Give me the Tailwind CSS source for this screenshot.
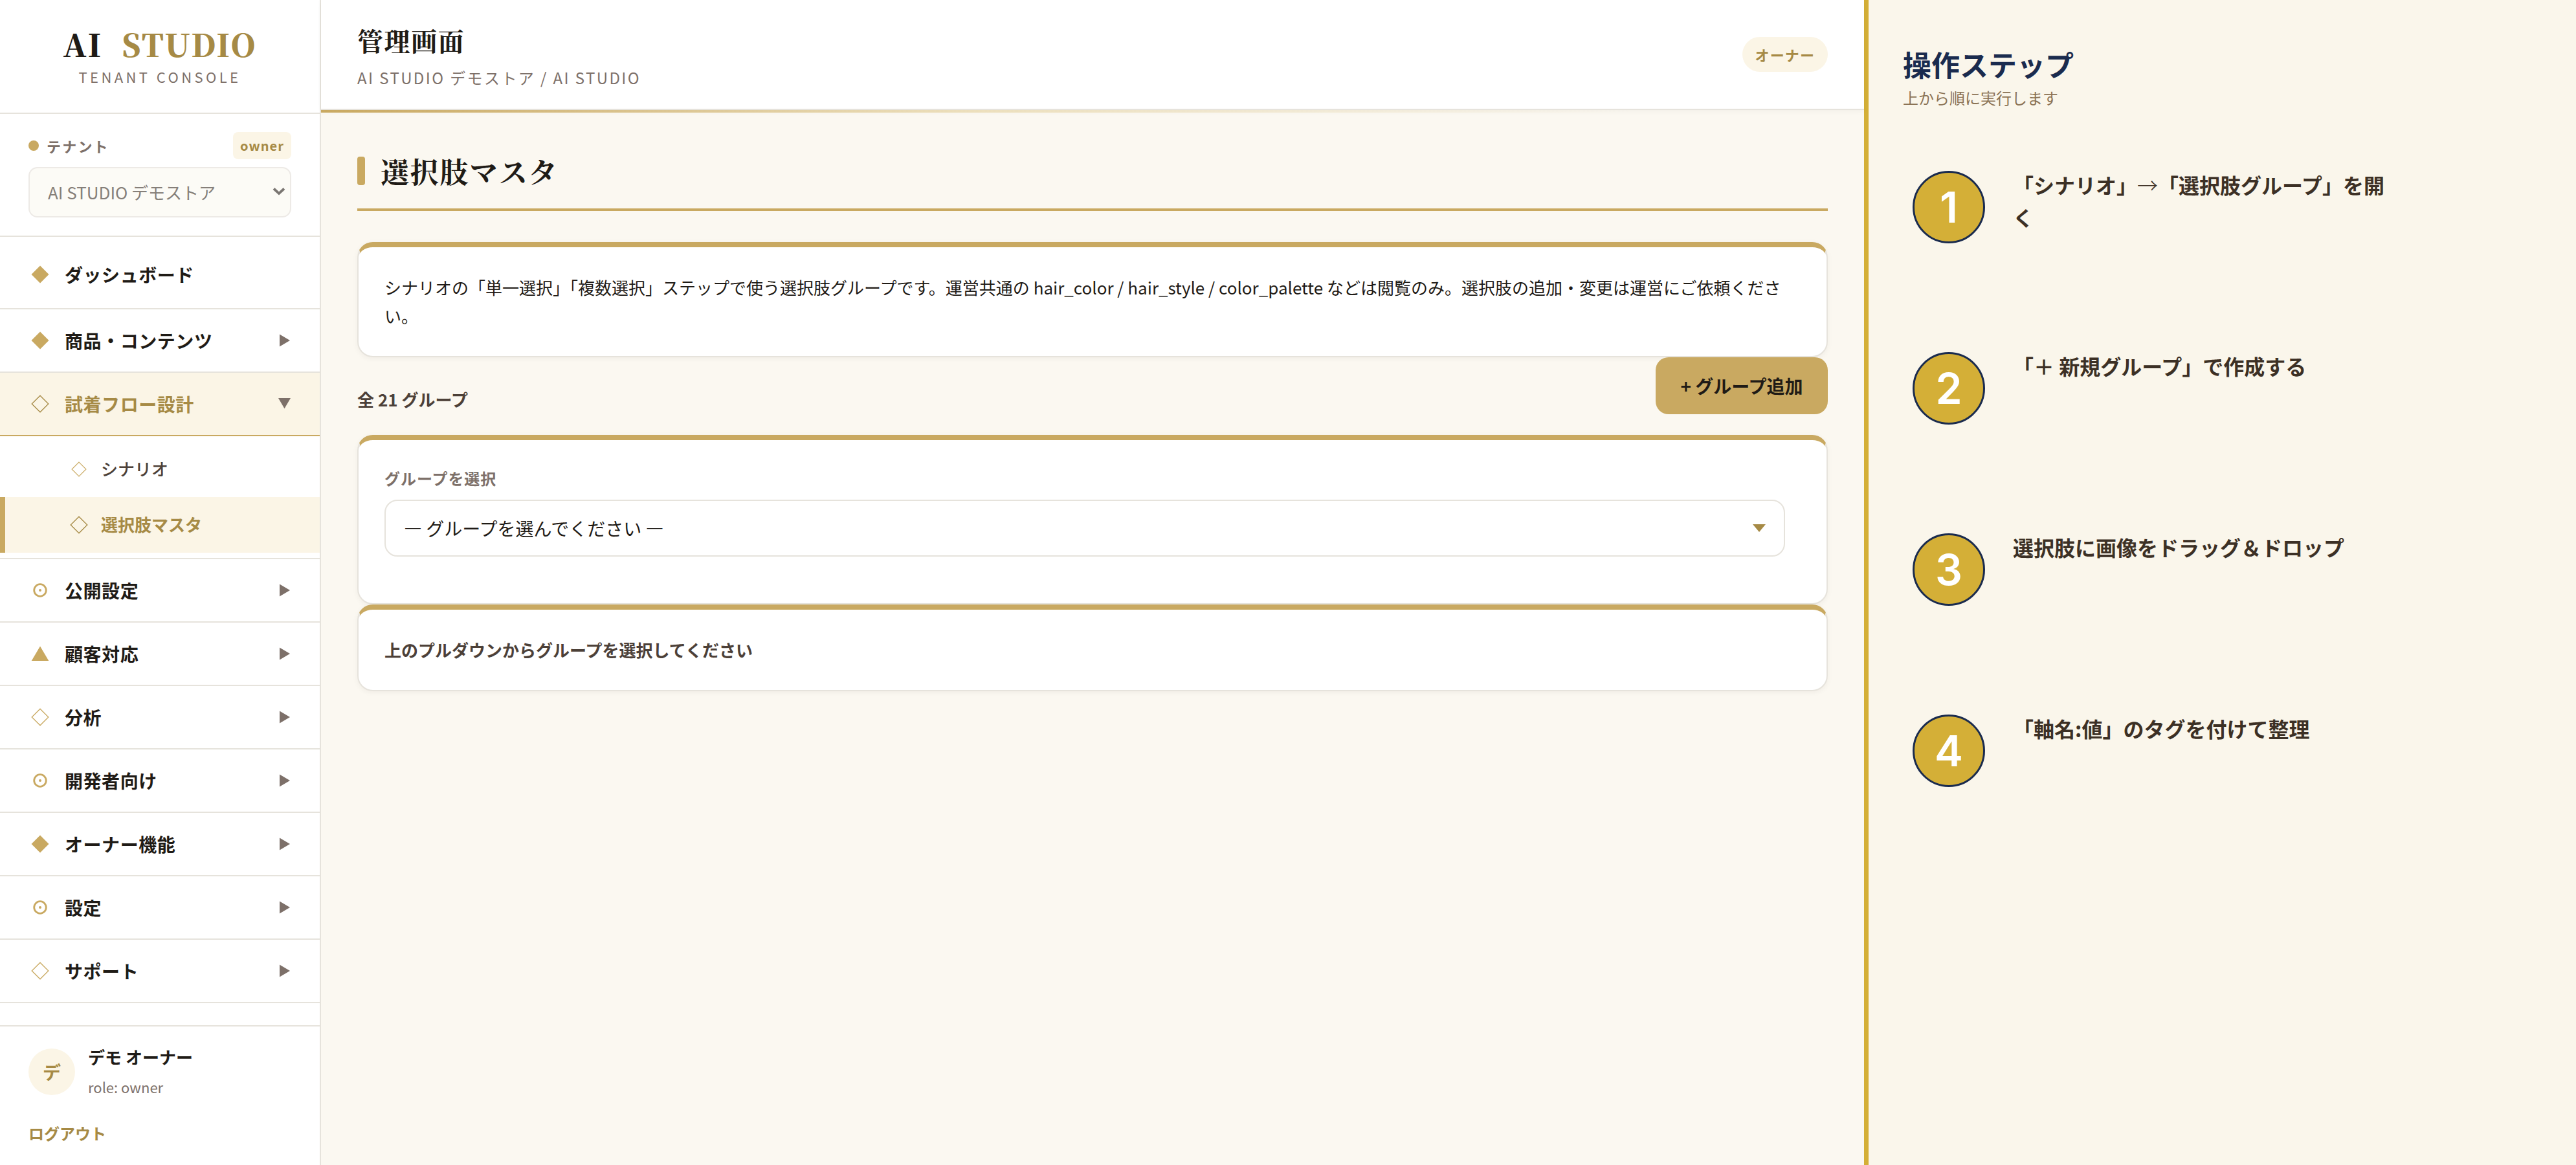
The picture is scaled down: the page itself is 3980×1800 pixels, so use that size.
<!DOCTYPE html>
<html lang="ja">
<head>
    <meta charset="UTF-8">
    <meta name="viewport" content="width=device-width, initial-scale=1.0">
    <title>AI STUDIO 管理画面</title>
    <script src="https://cdn.jsdelivr.net/npm/@tailwindcss/browser@4"></script>
</head>
<body class="flex w-[3980px] h-[1800px] overflow-hidden bg-[#fbf8f1] text-[#1f1b16] font-['Noto_Sans_CJK_JP',sans-serif] text-[26px] leading-[44px]">

    <!-- Icon symbols -->
    <svg class="hidden">
        <symbol id="diamond" viewBox="0 0 28 28"><path d="M14 .5 27.5 14 14 27.5.5 14z" fill="currentColor"/></symbol>
        <symbol id="diamond-o" viewBox="0 0 28 28"><path d="M14 1.2 26.8 14 14 26.8 1.2 14z" fill="none" stroke="currentColor" stroke-width="1.3"/></symbol>
        <symbol id="circle-dot" viewBox="0 0 28 28"><circle cx="14" cy="14" r="9.3" fill="none" stroke="currentColor" stroke-width="2.8"/><circle cx="14" cy="14" r="2" fill="currentColor"/></symbol>
        <symbol id="triangle" viewBox="0 0 28 28"><path d="M14 2.5 27.3 25H.7z" fill="currentColor"/></symbol>
        <symbol id="caret-right" viewBox="0 0 20 20"><path d="M2 .5 18 10 2 19.500z" fill="currentColor"/></symbol>
        <symbol id="caret-down" viewBox="0 0 20 20"><path d="M0 1h19L9.500 17.300z" fill="currentColor"/></symbol>
    </svg>

    <!-- Sidebar -->
    <aside class="flex flex-col w-[496px] shrink-0 bg-white border-r-2 border-[#e6e3dc]">
        <div class="h-[176px] pt-8 border-b-2 border-[#e6e3dc] text-center">
            <div class="font-['Noto_Serif_CJK_JP','Liberation_Serif',serif] font-black text-[48px] leading-[72px] tracking-[1.920px] whitespace-pre">AI <span class="text-[#a68a45] ml-4">STUDIO</span></div>
            <div class="text-[22px] leading-[28px] tracking-[4.4px] text-[#7d7069]">TENANT CONSOLE</div>
        </div>

        <div class="h-[190px] px-11 pt-7 border-b-2 border-[#e6e3dc]">
            <div class="flex items-center w-[406px] h-[42px]">
                <span class="size-4 rounded-full bg-[#c9a961]"></span>
                <span class="ml-3 font-bold text-[22px] tracking-[2.2px] text-[#7d7069]">テナント</span>
                <span class="ml-auto flex items-center justify-center w-[90px] h-[42px] rounded-lg bg-[#fbf5e6] font-bold text-[20px] tracking-[1px] text-[#a68a45]">owner</span>
            </div>
            <div class="mt-3 flex items-center justify-between w-[406px] h-[78px] pl-7 pr-[7px] rounded-[14px] border-2 border-[#edeae6] bg-[#fcfbf6] text-[#857f79]">
                <span>AI STUDIO デモストア</span>
                <svg class="w-5 h-4" viewBox="0 0 20 16"><path d="m2 2.500 8 7.500 8-7.500" fill="none" stroke="#7a7672" stroke-width="3.800"/></svg>
            </div>
        </div>

        <nav class="flex-1 font-bold text-[28px] tracking-[0.560px]">
            <a class="flex items-center h-[112px] pl-11 pt-1.5 border-b-2 border-[#e6e3dc]">
                <span class="w-9 flex justify-center text-[#c9a961]"><svg class="size-7"><use href="#diamond"/></svg></span>
                <span class="ml-5">ダッシュボード</span>
            </a>
            <a class="flex items-center h-[98px] pl-11 pr-11 border-b-2 border-[#e6e3dc]">
                <span class="w-9 flex justify-center text-[#c9a961]"><svg class="size-7"><use href="#diamond"/></svg></span>
                <span class="ml-5">商品・コンテンツ</span>
                <svg class="size-5 ml-auto text-[#7d7069]"><use href="#caret-right"/></svg>
            </a>
            <a class="flex items-center h-[98px] pl-11 pr-11 border-b-2 border-[#c9a961] bg-[#fbf5e6] text-[#a68a45]">
                <span class="w-9 flex justify-center"><svg class="size-7"><use href="#diamond-o"/></svg></span>
                <span class="ml-5">試着フロー設計</span>
                <svg class="size-5 ml-auto text-[#7d7069]"><use href="#caret-down"/></svg>
            </a>
            <div class="py-2 border-b-2 border-[#e6e3dc] text-[26px] tracking-normal">
                <a class="flex items-center h-[86px] pl-[104px] font-medium text-[#4c4038]">
                    <span class="w-9 flex justify-center text-[#c9a961]"><svg class="size-6"><use href="#diamond-o"/></svg></span>
                    <span class="ml-4 pb-[3px]">シナリオ</span>
                </a>
                <a class="flex items-center h-[86px] pl-24 border-l-8 border-[#c9a961] bg-[#fbf5e6] text-[#a68a45]">
                    <span class="w-9 flex justify-center"><svg class="size-7"><use href="#diamond-o"/></svg></span>
                    <span class="ml-4 pb-[3px]">選択肢マスタ</span>
                </a>
            </div>
            <a class="flex items-center h-[98px] pl-11 pr-11 border-b-2 border-[#e6e3dc]">
                <span class="w-9 flex justify-center text-[#c9a961]"><svg class="size-7"><use href="#circle-dot"/></svg></span>
                <span class="ml-5">公開設定</span>
                <svg class="size-5 ml-auto text-[#7d7069]"><use href="#caret-right"/></svg>
            </a>
            <a class="flex items-center h-[98px] pl-11 pr-11 border-b-2 border-[#e6e3dc]">
                <span class="w-9 flex justify-center text-[#c9a961]"><svg class="size-7"><use href="#triangle"/></svg></span>
                <span class="ml-5">顧客対応</span>
                <svg class="size-5 ml-auto text-[#7d7069]"><use href="#caret-right"/></svg>
            </a>
            <a class="flex items-center h-[98px] pl-11 pr-11 border-b-2 border-[#e6e3dc]">
                <span class="w-9 flex justify-center text-[#c9a961]"><svg class="size-7"><use href="#diamond-o"/></svg></span>
                <span class="ml-5">分析</span>
                <svg class="size-5 ml-auto text-[#7d7069]"><use href="#caret-right"/></svg>
            </a>
            <a class="flex items-center h-[98px] pl-11 pr-11 border-b-2 border-[#e6e3dc]">
                <span class="w-9 flex justify-center text-[#c9a961]"><svg class="size-7"><use href="#circle-dot"/></svg></span>
                <span class="ml-5">開発者向け</span>
                <svg class="size-5 ml-auto text-[#7d7069]"><use href="#caret-right"/></svg>
            </a>
            <a class="flex items-center h-[98px] pl-11 pr-11 border-b-2 border-[#e6e3dc]">
                <span class="w-9 flex justify-center text-[#c9a961]"><svg class="size-7"><use href="#diamond"/></svg></span>
                <span class="ml-5">オーナー機能</span>
                <svg class="size-5 ml-auto text-[#7d7069]"><use href="#caret-right"/></svg>
            </a>
            <a class="flex items-center h-[98px] pl-11 pr-11 border-b-2 border-[#e6e3dc]">
                <span class="w-9 flex justify-center text-[#c9a961]"><svg class="size-7"><use href="#circle-dot"/></svg></span>
                <span class="ml-5">設定</span>
                <svg class="size-5 ml-auto text-[#7d7069]"><use href="#caret-right"/></svg>
            </a>
            <a class="flex items-center h-[98px] pl-11 pr-11 border-b-2 border-[#e6e3dc]">
                <span class="w-9 flex justify-center text-[#c9a961]"><svg class="size-7"><use href="#diamond-o"/></svg></span>
                <span class="ml-5">サポート</span>
                <svg class="size-5 ml-auto text-[#7d7069]"><use href="#caret-right"/></svg>
            </a>
        </nav>

        <div class="h-[216px] px-11 pt-[27px] border-t-2 border-[#e6e3dc]">
            <div class="flex items-center leading-[40px]">
                <span class="flex items-center justify-center size-[72px] rounded-full bg-[#fbf5e6] font-bold text-[28px] text-[#a68a45]">デ</span>
                <div class="ml-5">
                    <div class="font-bold">デモ オーナー</div>
                    <div class="mt-1.5 text-[22px] text-[#7d7069]">role: owner</div>
                </div>
            </div>
            <a class="block mt-[30px] font-bold text-[24px] text-[#a68a45]">ログアウト</a>
        </div>
    </aside>

    <!-- Main -->
    <main class="w-[2384px] shrink-0">
        <header class="relative flex items-center justify-between h-[170px] px-14 bg-white border-b-2 border-[#e6e3dc] shadow-[0_2px_8px_rgba(31,27,22,0.04)]">
            <div class="pt-[3px]">
                <h1 class="font-['Noto_Serif_CJK_JP','Noto_Sans_CJK_JP',serif] font-bold text-[40px] leading-[60px] tracking-[1.600px]">管理画面</h1>
                <p class="mt-2 text-[24px] leading-[40px] tracking-[2.400px] text-[#7d7069]">AI STUDIO デモストア / AI STUDIO</p>
            </div>
            <span class="flex items-center h-[54px] px-5 rounded-full bg-[#fbf5e6] font-bold text-[22px] tracking-[1.100px] text-[#a68a45]">オーナー</span>
            <div class="absolute left-0 top-[170px] w-full h-1 bg-linear-to-r from-[#c9a961] via-[#ecdfbc] via-42% to-transparent to-85%"></div>
        </header>

        <div class="px-14 pt-[58px]">
            <div class="flex items-center h-[98px] pb-[22px] border-b-4 border-[#c9a961]">
                <span class="w-3 h-11 rounded-[4px] bg-[#c9a961]"></span>
                <h2 class="ml-6 font-['Noto_Serif_CJK_JP','Noto_Sans_CJK_JP',serif] font-bold text-[44px] tracking-[1.760px]">選択肢マスタ</h2>
            </div>

            <section class="mt-12 h-[178px] p-10 bg-white rounded-3xl border-2 border-t-8 border-[#e6e3dc] border-t-[#c9a961] shadow-[0_2px_8px_rgba(31,27,22,0.05)]">
                シナリオの「単一選択」「複数選択」ステップで使う選択肢グループです。運営共通の hair_color / hair_style / color_palette などは閲覧のみ。選択肢の追加・変更は運営にご依頼ください。
            </section>

            <div class="flex justify-between h-[120px]">
                <span class="pt-[43px] font-bold text-[#4c4038]">全 21 グループ</span>
                <button class="relative w-[266px] h-[88px] rounded-[20px] bg-[#c9a961] font-bold text-[28px]">+ グループ追加</button>
            </div>

            <section class="h-[262px] p-10 bg-white rounded-3xl border-2 border-t-8 border-[#e6e3dc] border-t-[#c9a961] shadow-[0_2px_8px_rgba(31,27,22,0.05)]">
                <div class="h-[52px] font-bold text-[24px] leading-[38px] tracking-[0.960px] text-[#7d7069]">グループを選択</div>
                <div class="flex items-center justify-between w-[2164px] h-[88px] pl-[28px] pr-7 rounded-[20px] border-2 border-[#e6e3dc] text-[28px]">
                    <span>— グループを選んでください —</span>
                    <svg class="w-5 h-3" viewBox="0 0 20 12"><path d="M0 0h20L10 12z" fill="#a68a45"/></svg>
                </div>
            </section>

            <section class="h-[134px] p-10 bg-white rounded-3xl border-2 border-t-8 border-[#e6e3dc] border-t-[#c9a961] shadow-[0_2px_8px_rgba(31,27,22,0.05)] font-bold text-[#4c4038]">
                上のプルダウンからグループを選択してください
            </section>
        </div>
    </main>

    <!-- Steps panel -->
    <aside class="flex-1 pl-[53px] pt-[69px] bg-[#faf6eb] border-l-7 border-[#d4af37]">
        <h2 class="font-bold text-[44px] leading-[60px] text-[#1a2b4e]">操作ステップ</h2>
        <p class="mt-1 text-[24px] leading-[36px] text-[#8b7355]">上から順に実行します</p>

        <ol class="mt-[95px] ml-[15px] font-bold text-[32px] leading-[50px] text-[#3c3025]">
            <li class="flex h-[280px]">
                <span class="flex items-center justify-center size-[112px] shrink-0 rounded-full border-3 border-[#1a2b4e] bg-[#d4af37] font-[Inter] font-semibold text-[66px] text-white">1</span>
                <span class="ml-[43px] -mt-1 w-[600px]">「シナリオ」<span class="font-light">→</span>「選択肢グループ」を開く</span>
            </li>
            <li class="flex h-[280px]">
                <span class="flex items-center justify-center size-[112px] shrink-0 rounded-full border-3 border-[#1a2b4e] bg-[#d4af37] font-[Inter] font-semibold text-[66px] text-white">2</span>
                <span class="ml-[43px] -mt-1 w-[600px]">「＋ 新規グループ」で作成する</span>
            </li>
            <li class="flex h-[280px]">
                <span class="flex items-center justify-center size-[112px] shrink-0 rounded-full border-3 border-[#1a2b4e] bg-[#d4af37] font-[Inter] font-semibold text-[66px] text-white">3</span>
                <span class="ml-[43px] -mt-1 w-[600px]">選択肢に画像をドラッグ＆ドロップ</span>
            </li>
            <li class="flex h-[280px]">
                <span class="flex items-center justify-center size-[112px] shrink-0 rounded-full border-3 border-[#1a2b4e] bg-[#d4af37] font-[Inter] font-semibold text-[66px] text-white">4</span>
                <span class="ml-[43px] -mt-1 w-[600px]">「軸名:値」のタグを付けて整理</span>
            </li>
        </ol>
    </aside>
</body>
</html>
